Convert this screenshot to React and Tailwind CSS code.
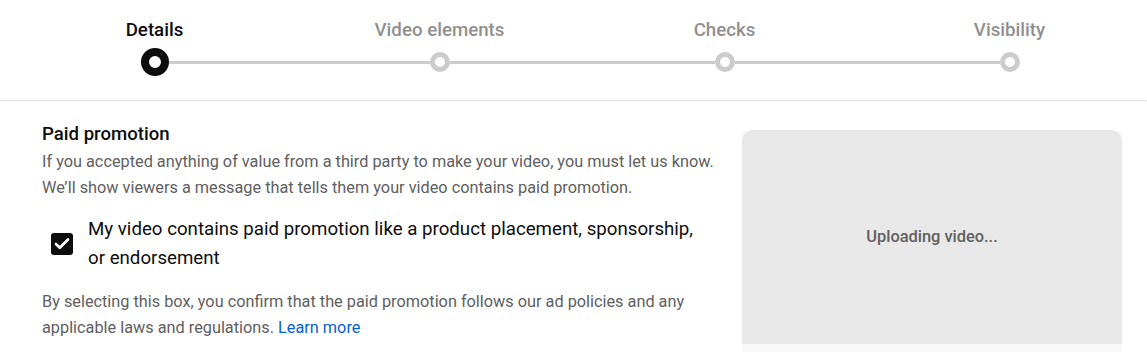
import { Check } from 'lucide-react';

const steps = ['Details', 'Video elements', 'Checks', 'Visibility'];

function Step({ label, index }) {
    const active = index === 0;
    const first = index === 0;
    const last = index === steps.length - 1;
    return (
        <div className="flex flex-col items-center">
            <div
                className={`h-6 whitespace-nowrap text-[18.7px] leading-6 font-medium ${
                    active ? 'text-[#0d0d0d]' : 'text-[#909090]'
                }`}
            >
                {label}
            </div>
            <div className="mt-[6px] flex h-7 w-full items-center">
                <div className={`h-[3px] flex-1 ${first ? '' : 'bg-[#cccccc]'}`} />
                {active ? (
                    <div className="h-7 w-7 rounded-full border-[8px] border-[#0d0d0d] bg-white" />
                ) : (
                    <div className="h-5 w-5 rounded-full border-[5px] border-[#cccccc] bg-white" />
                )}
                <div className={`h-[3px] flex-1 ${last ? '' : 'bg-[#cccccc]'}`} />
            </div>
        </div>
    );
}

export default function App() {
    return (
        <div
            className="min-h-[352px] w-full overflow-hidden bg-white"
            style={{ fontFamily: 'Roboto, "Noto Sans", Arial, sans-serif' }}
        >
            <header className="h-[101px] overflow-hidden border-b border-[#e5e5e5] pt-[18px] shadow-[0_1px_2px_rgba(0,0,0,0.04)]">
                <div className="ml-[12px] grid w-[1140px] grid-cols-4">
                    {steps.map((s, i) => (
                        <Step key={s} label={s} index={i} />
                    ))}
                </div>
            </header>

            <main className="flex gap-[22px] pl-[42px] pr-[25px]">
                <section className="w-[678px] pt-[21px]">
                    <h2 className="whitespace-nowrap text-[18.6px] font-medium leading-6 text-[#0d0d0d]">
                        Paid promotion
                    </h2>
                    <p className="mt-[3px] whitespace-nowrap text-[16.3px] leading-[26px] text-[#606060]">
                        If you accepted anything of value from a third party to make your video, you must let us know.
                        <br />
                        We’ll show viewers a message that tells them your video contains paid promotion.
                    </p>

                    <label className="mt-[14px] flex items-center gap-[15px] pl-[9px]">
                        <span className="flex h-[22px] w-[22px] shrink-0 items-center justify-center rounded-[3px] bg-[#0d0d0d]">
                            <Check size={18} strokeWidth={3.5} className="text-white" />
                        </span>
                        <span className="whitespace-nowrap text-[18.7px] leading-[29px] text-[#0d0d0d]">
                            My video contains paid promotion like a product placement, sponsorship,
                            <br />
                            or endorsement
                        </span>
                    </label>

                    <p className="mt-[16px] whitespace-nowrap text-[16.3px] leading-[26px] text-[#606060]">
                        By selecting this box, you confirm that the paid promotion follows our ad policies and any
                        <br />
                        applicable laws and regulations.{' '}
                        <a href="#" className="text-[#065fd4]">
                            Learn more
                        </a>
                    </p>
                </section>

                <aside className="mt-[29px] w-[380px] shrink-0 overflow-hidden rounded-t-[10px]">
                    <div className="flex h-[214px] items-center justify-center bg-[#e8e8e8]">
                        <span className="text-[16.4px] font-medium text-[#606060]">Uploading video...</span>
                    </div>
                    <div className="h-[20px] bg-[#f9f9f9]" />
                </aside>
            </main>
        </div>
    );
}
